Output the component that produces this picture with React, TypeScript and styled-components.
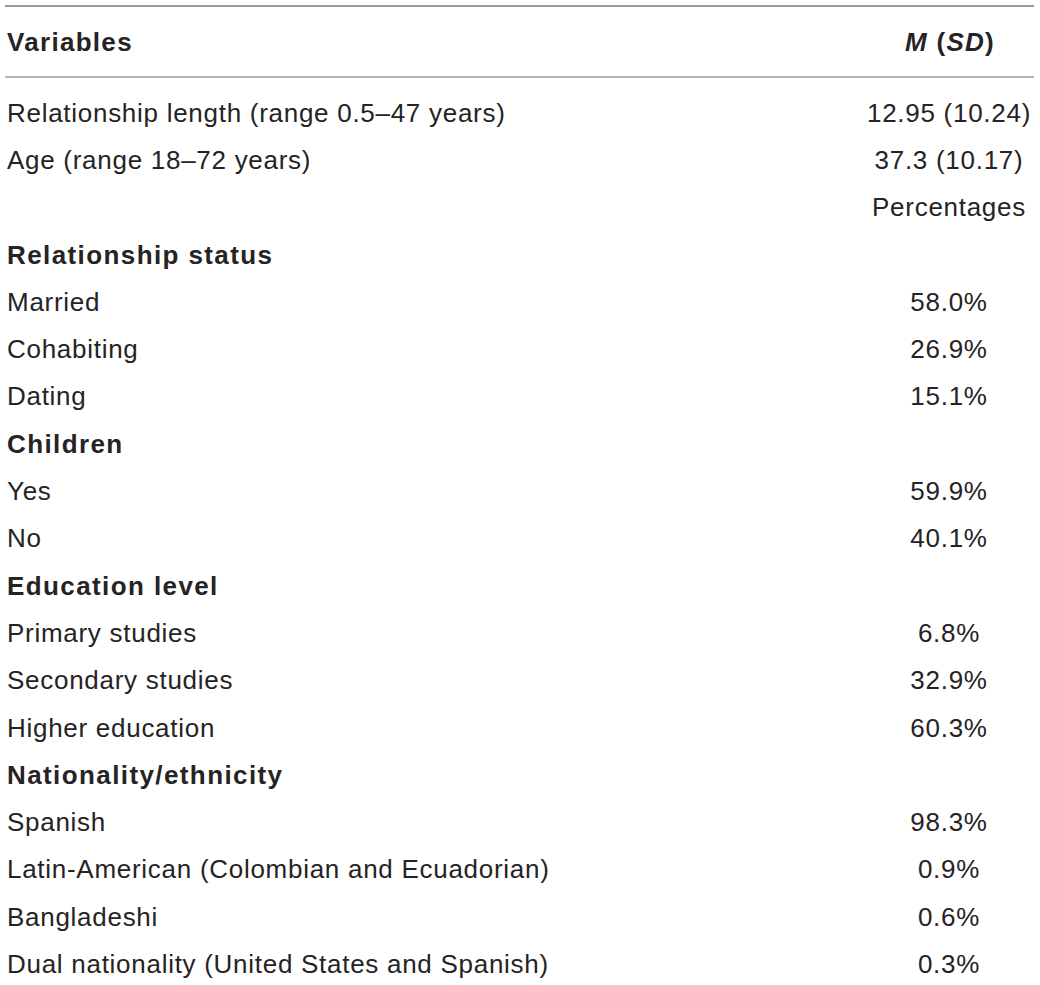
import React from "react";
import styled, { createGlobalStyle } from "styled-components";

const Global = createGlobalStyle`
  html, body { margin: 0; padding: 0; background: #ffffff; }
  body { font-family: "Liberation Sans", Arial, Helvetica, sans-serif; color: #262324; }
`;

const Wrap = styled.div`
  padding: 5px 6px 0 5px;
`;

const Table = styled.table`
  width: 100%;
  border-collapse: collapse;
  font-size: 26px;
  line-height: 1;
`;

const HeadRow = styled.tr`
  border-top: 2px solid #9a9a9a;
  border-bottom: 2px solid #b4b4b4;
`;

const HeadCell = styled.th<{ $center?: boolean }>`
  height: 69px;
  padding: 0 0 0 2px;
  font-weight: 700;
  letter-spacing: 1.3px;
  text-align: ${(p) => (p.$center ? "center" : "left")};
  width: ${(p) => (p.$center ? "168px" : "auto")};
`;

const Spacer = styled.tr`
  height: 12px;
`;

const Row = styled.tr`
  height: 47.3px;
`;

const Label = styled.td<{ $bold?: boolean }>`
  padding: 0 0 0 2px;
  font-weight: ${(p) => (p.$bold ? 700 : 400)};
  letter-spacing: ${(p) => (p.$bold ? "1.4px" : "0.72px")};
  white-space: nowrap;
`;

const Value = styled.td`
  padding: 0;
  letter-spacing: 0.72px;
  text-align: center;
  white-space: nowrap;
`;

type R = { label: string; value?: string; bold?: boolean };

const rows: R[] = [
  { label: "Relationship length (range 0.5–47 years)", value: "12.95 (10.24)" },
  { label: "Age (range 18–72 years)", value: "37.3 (10.17)" },
  { label: "", value: "Percentages" },
  { label: "Relationship status", bold: true },
  { label: "Married", value: "58.0%" },
  { label: "Cohabiting", value: "26.9%" },
  { label: "Dating", value: "15.1%" },
  { label: "Children", bold: true },
  { label: "Yes", value: "59.9%" },
  { label: "No", value: "40.1%" },
  { label: "Education level", bold: true },
  { label: "Primary studies", value: "6.8%" },
  { label: "Secondary studies", value: "32.9%" },
  { label: "Higher education", value: "60.3%" },
  { label: "Nationality/ethnicity", bold: true },
  { label: "Spanish", value: "98.3%" },
  { label: "Latin-American (Colombian and Ecuadorian)", value: "0.9%" },
  { label: "Bangladeshi", value: "0.6%" },
  { label: "Dual nationality (United States and Spanish)", value: "0.3%" },
];

export default function App() {
  return (
    <Wrap>
      <Global />
      <Table>
        <thead>
          <HeadRow>
            <HeadCell>Variables</HeadCell>
            <HeadCell $center>
              <i>M</i> (<i>SD</i>)
            </HeadCell>
          </HeadRow>
        </thead>
        <tbody>
          <Spacer>
            <td />
            <td />
          </Spacer>
          {rows.map((r, i) => (
            <Row key={i}>
              <Label $bold={r.bold}>{r.label}</Label>
              <Value>{r.value ?? ""}</Value>
            </Row>
          ))}
        </tbody>
      </Table>
    </Wrap>
  );
}
